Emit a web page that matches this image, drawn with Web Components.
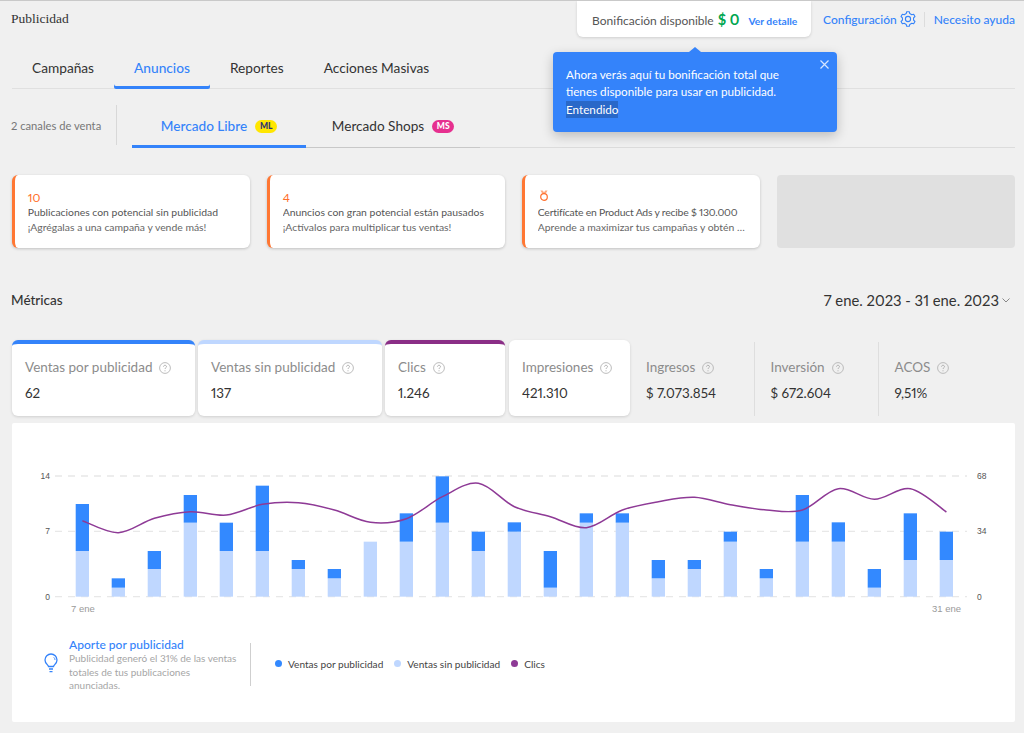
<!DOCTYPE html>
<html lang="es">
<head>
<meta charset="utf-8">
<title>Publicidad</title>
<style>
  html, body { margin: 0; padding: 0; background: #f0f0f0; }
  body { font-family: Lato, "Open Sans", sans-serif; font-variant-numeric: proportional-nums; color: #333; width: 1024px; height: 733px; overflow: hidden; border-top: 1px solid #c9c9c9; box-sizing: border-box; }
</style>
</head>
<body>
<ads-page></ads-page>
<script>
const SANS = 'Lato, "Open Sans", sans-serif';
const BLUE = '#3483fa';

const helpIcon = `<svg class="help" width="12" height="12" viewBox="0 0 12 12" aria-hidden="true"><circle cx="6" cy="6" r="5.4" fill="none" stroke="#b5b5b5" stroke-width=".9"/><path d="M4.5 4.7c0-.9.7-1.4 1.5-1.4s1.5.5 1.5 1.3c0 1.2-1.5 1.2-1.5 2.4" fill="none" stroke="#a8a8a8" stroke-width=".9"/><circle cx="6" cy="8.7" r=".55" fill="#a8a8a8"/></svg>`;

// engranaje de 6 dientes
function gearPath(teeth, outer, inner, c) {
  const pts = [];
  const step = Math.PI * 2 / teeth;
  for (let i = 0; i < teeth; i++) {
    const a = i * step - Math.PI / 2;
    [[-.3, inner], [-.17, outer], [.17, outer], [.3, inner]].forEach(([o, r]) => {
      pts.push(`${(c + r * Math.cos(a + o * step)).toFixed(2)} ${(c + r * Math.sin(a + o * step)).toFixed(2)}`);
    });
  }
  return 'M' + pts.join('L') + 'Z';
}

class AdsHeader extends HTMLElement {
  connectedCallback() {
    this.attachShadow({ mode: 'open' });
    this.shadowRoot.innerHTML = `
      <style>
        :host { display: flex; align-items: flex-start; height: 36px; position: relative; font-family: ${SANS}; }
        .title { font: 13.5px "Liberation Serif", serif; color: #333; line-height: 36px; margin-top: 0; }
        .right { margin-left: auto; display: flex; align-items: center; }
        .bonus { width: 234px; height: 36px; box-sizing: border-box; background: #fff; border-radius: 0 0 6px 6px; box-shadow: 0 1px 3px rgba(0,0,0,.14); display: flex; align-items: center; padding-left: 15px; font-size: 12px; color: #555; white-space: nowrap; }
        .links { display: flex; align-items: center; margin-left: 12px; height: 36px; color: ${BLUE}; font-size: 12px; font-weight: 500; white-space: nowrap; }
        .links svg { margin-left: 3px; display: block; }
        .sep { width: 1px; height: 15px; background: #dcdcdc; margin: 0 9px 0 8px; }
      </style>
      <div class="title"><slot name="title"></slot></div>
      <div class="right">
        <div class="bonus"><slot name="bonus"></slot></div>
        <div class="links">
          <span>Configuración</span>
          <svg width="16" height="16" viewBox="0 0 16 16" fill="none" stroke="${BLUE}" stroke-width="1.1" aria-hidden="true"><path d="${gearPath(6, 7.4, 5.7, 8)}" stroke-linejoin="round"/><circle cx="8" cy="8" r="2.6"/></svg>
          <span class="sep"></span>
          <span>Necesito ayuda</span>
        </div>
      </div>
      <slot name="tip"></slot>
    `;
  }
}

class AdsTooltip extends HTMLElement {
  connectedCallback() {
    this.attachShadow({ mode: 'open' });
    this.shadowRoot.innerHTML = `
      <style>
        :host { display: block; position: absolute; left: 542px; top: 51px; width: 284px; height: 80px; box-sizing: border-box; background: ${BLUE}; border-radius: 4px; box-shadow: 0 4px 12px rgba(0,0,0,.22); color: #fff; font-family: ${SANS}; font-size: 11.7px; line-height: 16.5px; padding: 14px 13px; z-index: 5; }
        .arrow { position: absolute; left: 136px; top: -5px; width: 0; height: 0; border: solid transparent; border-width: 0 6px 5px; border-bottom-color: ${BLUE}; }
        .close { position: absolute; right: 8px; top: 8px; display: block; }
        .ok { display: inline-block; background: #2968c8; line-height: 17px; margin-top: 2px; }
      </style>
      <span class="arrow"></span>
      <svg class="close" width="9" height="9" viewBox="0 0 9 9" stroke="#d6e6ff" stroke-width="1.2" aria-hidden="true"><path d="M.5.5l8 8M8.5.5l-8 8"/></svg>
      <div><slot></slot></div>
      <span class="ok"><slot name="ok"></slot></span>
    `;
  }
}

class AdsNav extends HTMLElement {
  connectedCallback() {
    this.attachShadow({ mode: 'open' });
    this.shadowRoot.innerHTML = `
      <style>
        :host { display: flex; box-sizing: border-box; height: 40px; margin: 12px 0 0 1px; border-bottom: 1px solid #e0e0e0; font-family: ${SANS}; font-size: 13.7px; }
      </style>
      <slot></slot>
    `;
  }
}

class AdsNavItem extends HTMLElement {
  connectedCallback() {
    this.attachShadow({ mode: 'open' });
    this.shadowRoot.innerHTML = `
      <style>
        :host { display: block; padding: 10px 20px 0; box-sizing: border-box; height: 40px; color: #333; line-height: 17px; white-space: nowrap; }
        :host([active]) { color: ${BLUE}; box-shadow: inset 0 -3px 0 ${BLUE}; border-radius: 0 0 2px 2px; font-weight: 500; }
      </style>
      <slot></slot>
    `;
  }
}

class AdsChannels extends HTMLElement {
  connectedCallback() {
    this.attachShadow({ mode: 'open' });
    this.shadowRoot.innerHTML = `
      <style>
        :host { display: flex; height: 43px; margin-top: 16px; font-family: ${SANS}; }
        .count { width: 105px; height: 40px; border-right: 1px solid #d8d8d8; font-size: 11.2px; color: #777; line-height: 41px; white-space: nowrap; }
        .tabs { display: flex; margin-left: 15px; flex: 1; border-bottom: 1px solid #dcdcdc; }
      </style>
      <div class="count"><slot name="count"></slot></div>
      <div class="tabs"><slot></slot></div>
    `;
  }
}

class AdsChannel extends HTMLElement {
  connectedCallback() {
    this.attachShadow({ mode: 'open' });
    this.shadowRoot.innerHTML = `
      <style>
        :host { display: flex; width: 174px; height: 43px; box-sizing: border-box; padding: 2px 0 3px; justify-content: center; align-items: center; gap: 8px; font-size: 13.6px; color: #333; white-space: nowrap; border-bottom: 1px solid #c8c8c8; margin-bottom: -1px; }
        :host([active]) { color: ${BLUE}; border-bottom: 3px solid ${BLUE}; padding-bottom: 1px; font-weight: 500; }
        .badge { font-size: 8.5px; font-weight: 900; line-height: 13px; height: 13px; width: 22px; margin-top: 1px; text-align: center; border-radius: 7px; background: var(--badge-bg); color: var(--badge-fg); }
      </style>
      <slot></slot>
      <span class="badge">${this.getAttribute('badge')}</span>
    `;
  }
}

class AdsTips extends HTMLElement {
  connectedCallback() {
    this.attachShadow({ mode: 'open' });
    this.shadowRoot.innerHTML = `
      <style>
        :host { display: grid; grid-template-columns: repeat(4, 1fr); gap: 16.8px; height: 73px; margin: 27px 0 0 .7px; font-family: ${SANS}; }
      </style>
      <slot></slot>
    `;
  }
}

class AdsTip extends HTMLElement {
  connectedCallback() {
    this.attachShadow({ mode: 'open' });
    this.shadowRoot.innerHTML = `
      <style>
        :host { display: block; box-sizing: border-box; min-width: 0; background: #fff; border-left: 3.5px solid #ff7733; border-radius: 6px; box-shadow: 0 1px 3px rgba(0,0,0,.2); padding: 15px 11px 0 13px; font-size: 10.4px; line-height: 15px; color: #555; }
        :host([empty]) { background: #e0e0e0; border: 0; box-shadow: none; border-radius: 4px; padding: 0; }
        .head { color: #ff6f2c; font-size: 12px; height: 15px; line-height: 15px; }
        .txt { white-space: nowrap; overflow: hidden; text-overflow: ellipsis; }
        .sub { color: #666; }
      </style>
      <div class="head"><slot name="head"></slot></div>
      <div class="txt"><slot name="text"></slot></div>
      <div class="txt sub"><slot name="sub"></slot></div>
    `;
  }
}

class AdsMetricsHead extends HTMLElement {
  connectedCallback() {
    this.attachShadow({ mode: 'open' });
    this.shadowRoot.innerHTML = `
      <style>
        :host { display: flex; align-items: center; justify-content: space-between; height: 30px; margin-top: 37px; font-family: ${SANS}; color: #333; }
        .title { font-size: 13.5px; font-weight: 500; }
        .range { display: flex; align-items: center; font-size: 14.8px; margin-right: 5px; gap: 3px; white-space: nowrap; }
      </style>
      <div class="title"><slot name="title"></slot></div>
      <div class="range"><slot name="range"></slot>
        <svg width="8" height="5" viewBox="0 0 8 5" fill="none" stroke="#888" aria-hidden="true"><path d="M.5.5L4 4 7.5.5"/></svg>
      </div>
    `;
  }
}

class AdsMetrics extends HTMLElement {
  connectedCallback() {
    this.attachShadow({ mode: 'open' });
    this.shadowRoot.innerHTML = `
      <style>
        :host { display: flex; height: 76px; margin: 25px 0 0 1px; font-family: ${SANS}; }
      </style>
      <slot></slot>
    `;
  }
}

class AdsMetric extends HTMLElement {
  connectedCallback() {
    this.attachShadow({ mode: 'open' });
    this.shadowRoot.innerHTML = `
      <style>
        :host { display: block; box-sizing: border-box; width: var(--w); flex: none; margin-right: var(--gap, 0); padding: 16px 0 0 13px; border-radius: 6px; white-space: nowrap; }
        :host([card]) { background: #fff; border-top: 4px solid var(--bar, #fff); box-shadow: 0 1px 3px rgba(0,0,0,.14); padding-top: 15px; }
        :host([plain]) { padding: 19px 0 0 16px; }
        :host([sep]) { position: relative; }
        :host([sep])::after { content: ""; position: absolute; right: 0; top: 2px; bottom: 0; width: 1px; background: #dedede; }
        .label { display: flex; align-items: center; gap: 7px; font-size: 13.5px; line-height: 17px; color: #8c8c8c; }
        .value { font-size: 13.4px; line-height: 17px; margin-top: 9px; color: #333; }
      </style>
      <div class="label"><slot></slot>${helpIcon}</div>
      <div class="value">${this.getAttribute('value')}</div>
    `;
  }
}

// alturas tomadas de la captura, en px de pagina: [tope azul, corte, ] base 596.7
const BARS = [
  [132,273],[355,383],[273,327],[105,188],[188,273],[77,273],[300,327],[327,355],
  [245,245],[160,245],[49,188],[215,273],[187,215],[273,383],[160,188],[160,188],
  [300,355],[300,327],[215,245],[327,355],[105,245],[187,245],[327,383],[160,300],[215,300],
];
const LINE = [182,218,175,155,165,133,128,150,187,176,110,70,140,170,203,150,125,112,134,150,150,86,118,86,156];
const toY = z => 460 + z / 3;
const barX = i => 75.7 + 36 * i;

function smoothPath(pts) {
  let d = `M${pts[0][0]} ${pts[0][1].toFixed(1)}`;
  for (let i = 0; i < pts.length - 1; i++) {
    const p0 = pts[i - 1] || pts[i], p1 = pts[i], p2 = pts[i + 1], p3 = pts[i + 2] || p2;
    const c1x = p1[0] + (p2[0] - p0[0]) / 6, c1y = p1[1] + (p2[1] - p0[1]) / 6;
    const c2x = p2[0] - (p3[0] - p1[0]) / 6, c2y = p2[1] - (p3[1] - p1[1]) / 6;
    d += `C${c1x.toFixed(1)} ${c1y.toFixed(1)} ${c2x.toFixed(1)} ${c2y.toFixed(1)} ${p2[0]} ${p2[1].toFixed(1)}`;
  }
  return d;
}

class AdsChart extends HTMLElement {
  connectedCallback() {
    this.attachShadow({ mode: 'open' });
    const base = toY(410);
    const bars = BARS.map(([top, cut], i) => `
      <rect x="${barX(i)}" y="${toY(cut)}" width="13.3" height="${base - toY(cut)}" fill="#bfd7ff"/>
      ${top < cut ? `<rect x="${barX(i)}" y="${toY(top)}" width="13.3" height="${toY(cut) - toY(top)}" fill="#3389ff"/>` : ''}`).join('');
    const grid = [[48,'14','68'],[214,'7','34'],[410,'0','0']].map(([z, l, r]) => `
      <line x1="55" x2="967" y1="${toY(z)}" y2="${toY(z)}" stroke="#e8e8e8" stroke-width="1.4" stroke-dasharray="7 6"/>
      <text x="50" y="${toY(z) + 3}" text-anchor="end">${l}</text>
      <text x="977" y="${toY(z) + 3}">${r}</text>`).join('');
    const line = smoothPath(LINE.map((z, i) => [82.4 + 36 * i, toY(z)]));
    this.shadowRoot.innerHTML = `
      <style>
        :host { display: block; box-sizing: border-box; height: 299px; margin: 7px 0 0 1px; background: #fff; border-radius: 2px; font-family: ${SANS}; }
        svg.plot { display: block; }
        svg.plot text { font: 8.5px "Liberation Sans", Arial, sans-serif; fill: #555; }
        svg.plot text.day { font-size: 9.5px; fill: #9a9a9a; }
        .foot { display: flex; margin: 5px 0 0 32px; height: 43px; }
        .bulb { margin-top: 10px; }
        .note { width: 170px; margin-left: 11px; }
        .note h4 { margin: -5px 0 0; color: ${BLUE}; font-size: 12px; font-weight: 500; line-height: 14px; white-space: nowrap; }
        .note p { margin: 0; font-size: 10px; line-height: 13.5px; color: #a6a6a6; white-space: nowrap; }
        .legend { margin-left: 11px; border-left: 1px solid #cfcfcf; display: flex; align-items: center; padding: 0 0 2px 24px; height: 43px; box-sizing: border-box; font-size: 10.1px; color: #444; }
        .legend i { width: 7px; height: 7px; border-radius: 50%; margin-right: 6px; flex: none; }
        .legend span { margin-right: 11px; white-space: nowrap; }
      </style>
      <svg class="plot" width="1003" height="215" viewBox="12 423 1003 215">
        ${grid}${bars}
        <path d="${line}" fill="none" stroke="#8e3a96" stroke-width="1.5"/>
        <text class="day" x="71" y="612">7 ene</text>
        <text class="day" x="932" y="612">31 ene</text>
      </svg>
      <div class="foot">
        <svg class="bulb" width="14" height="20" viewBox="0 0 14 20" fill="none" stroke="${BLUE}" stroke-width="1.3" aria-hidden="true"><path d="M4.5 13.5C4.3 11.8 1 10.8 1 6.9 1 3.6 3.7 1 7 1s6 2.6 6 5.9c0 3.9-3.3 4.9-3.5 6.6z"/><path d="M5 16h4M5.5 18.6h3"/><path d="M9.8 4.4c.8.6 1.2 1.5 1.2 2.5" stroke-width="1"/></svg>
        <div class="note">
          <h4><slot name="note-title"></slot></h4>
          <p><slot name="note"></slot></p>
        </div>
        <div class="legend">
          <i style="background:#3389ff"></i><span>Ventas por publicidad</span>
          <i style="background:#bfd7ff"></i><span>Ventas sin publicidad</span>
          <i style="background:#8e3a96"></i><span>Clics</span>
        </div>
      </div>
    `;
  }
}

class AdsPage extends HTMLElement {
  connectedCallback() {
    this.attachShadow({ mode: 'open' });
    this.shadowRoot.innerHTML = `
      <style>
        :host { display: block; padding: 0 9px 0 11px; position: relative; }
        .medal { display: block; margin: 0 0 0 1.5px; }
      </style>
      <ads-header>
        <span slot="title">Publicidad</span>
        <span slot="bonus">Bonificación disponible <b style="color:#00a650;font-size:14.5px;margin-left:1px">$ 0</b><a style="color:${BLUE};font-size:10.3px;font-weight:700;margin-left:9px">Ver detalle</a></span>
        <ads-tooltip slot="tip">
          Ahora verás aquí tu bonificación total que<br>tienes disponible para usar en publicidad.
          <span slot="ok">Entendido</span>
        </ads-tooltip>
      </ads-header>
      <ads-nav>
        <ads-nav-item>Campañas</ads-nav-item>
        <ads-nav-item active>Anuncios</ads-nav-item>
        <ads-nav-item>Reportes</ads-nav-item>
        <ads-nav-item>Acciones Masivas</ads-nav-item>
      </ads-nav>
      <ads-channels>
        <span slot="count">2 canales de venta</span>
        <ads-channel active badge="ML" style="--badge-bg:#ffe600;--badge-fg:#2d3277">Mercado Libre</ads-channel>
        <ads-channel badge="MS" style="--badge-bg:#e6308f;--badge-fg:#fff">Mercado Shops</ads-channel>
      </ads-channels>
      <ads-tips>
        <ads-tip>
          <span slot="head">10</span>
          <span slot="text">Publicaciones con potencial sin publicidad</span>
          <span slot="sub">¡Agrégalas a una campaña y vende más!</span>
        </ads-tip>
        <ads-tip>
          <span slot="head">4</span>
          <span slot="text">Anuncios con gran potencial están pausados</span>
          <span slot="sub">¡Actívalos para multiplicar tus ventas!</span>
        </ads-tip>
        <ads-tip>
          <svg slot="head" class="medal" width="10" height="11" viewBox="0 0 10 11" fill="none" aria-hidden="true"><path d="M1.4.4h2.2L5 2.2 6.4.4h2.2L6.6 3.8H3.4z" fill="#ffa97f"/><circle cx="5" cy="7" r="3.3" stroke="#ff6f2c" stroke-width="1.2"/></svg>
          <span slot="text" style="letter-spacing:-.2px">Certifícate en Product Ads y recibe $ 130.000</span>
          <span slot="sub">Aprende a maximizar tus campañas y obtén excelentes resultados</span>
        </ads-tip>
        <ads-tip empty></ads-tip>
      </ads-tips>
      <ads-metrics-head>
        <span slot="title">Métricas</span>
        <span slot="range">7 ene. 2023 - 31 ene. 2023</span>
      </ads-metrics-head>
      <ads-metrics>
        <ads-metric card value="62" style="--w:183px;--gap:3px;--bar:#3483fa">Ventas por publicidad</ads-metric>
        <ads-metric card value="137" style="--w:183.5px;--gap:3.5px;--bar:#bfd7ff">Ventas sin publicidad</ads-metric>
        <ads-metric card value="1.246" style="--w:120px;--gap:4px;--bar:#8a2e86">Clics</ads-metric>
        <ads-metric card value="421.310" style="--w:121px">Impresiones</ads-metric>
        <ads-metric plain sep value="$ 7.073.854" style="--w:124.5px">Ingresos</ads-metric>
        <ads-metric plain sep value="$ 672.604" style="--w:124px">Inversión</ads-metric>
        <ads-metric plain value="9,51%" style="--w:120px">ACOS</ads-metric>
      </ads-metrics>
      <ads-chart>
        <span slot="note-title">Aporte por publicidad</span>
        <span slot="note">Publicidad generó el 31% de las ventas<br>totales de tus publicaciones<br>anunciadas.</span>
      </ads-chart>
    `;
  }
}

customElements.define('ads-header', AdsHeader);
customElements.define('ads-tooltip', AdsTooltip);
customElements.define('ads-nav', AdsNav);
customElements.define('ads-nav-item', AdsNavItem);
customElements.define('ads-channels', AdsChannels);
customElements.define('ads-channel', AdsChannel);
customElements.define('ads-tips', AdsTips);
customElements.define('ads-tip', AdsTip);
customElements.define('ads-metrics-head', AdsMetricsHead);
customElements.define('ads-metrics', AdsMetrics);
customElements.define('ads-metric', AdsMetric);
customElements.define('ads-chart', AdsChart);
customElements.define('ads-page', AdsPage);
</script>
</body>
</html>
